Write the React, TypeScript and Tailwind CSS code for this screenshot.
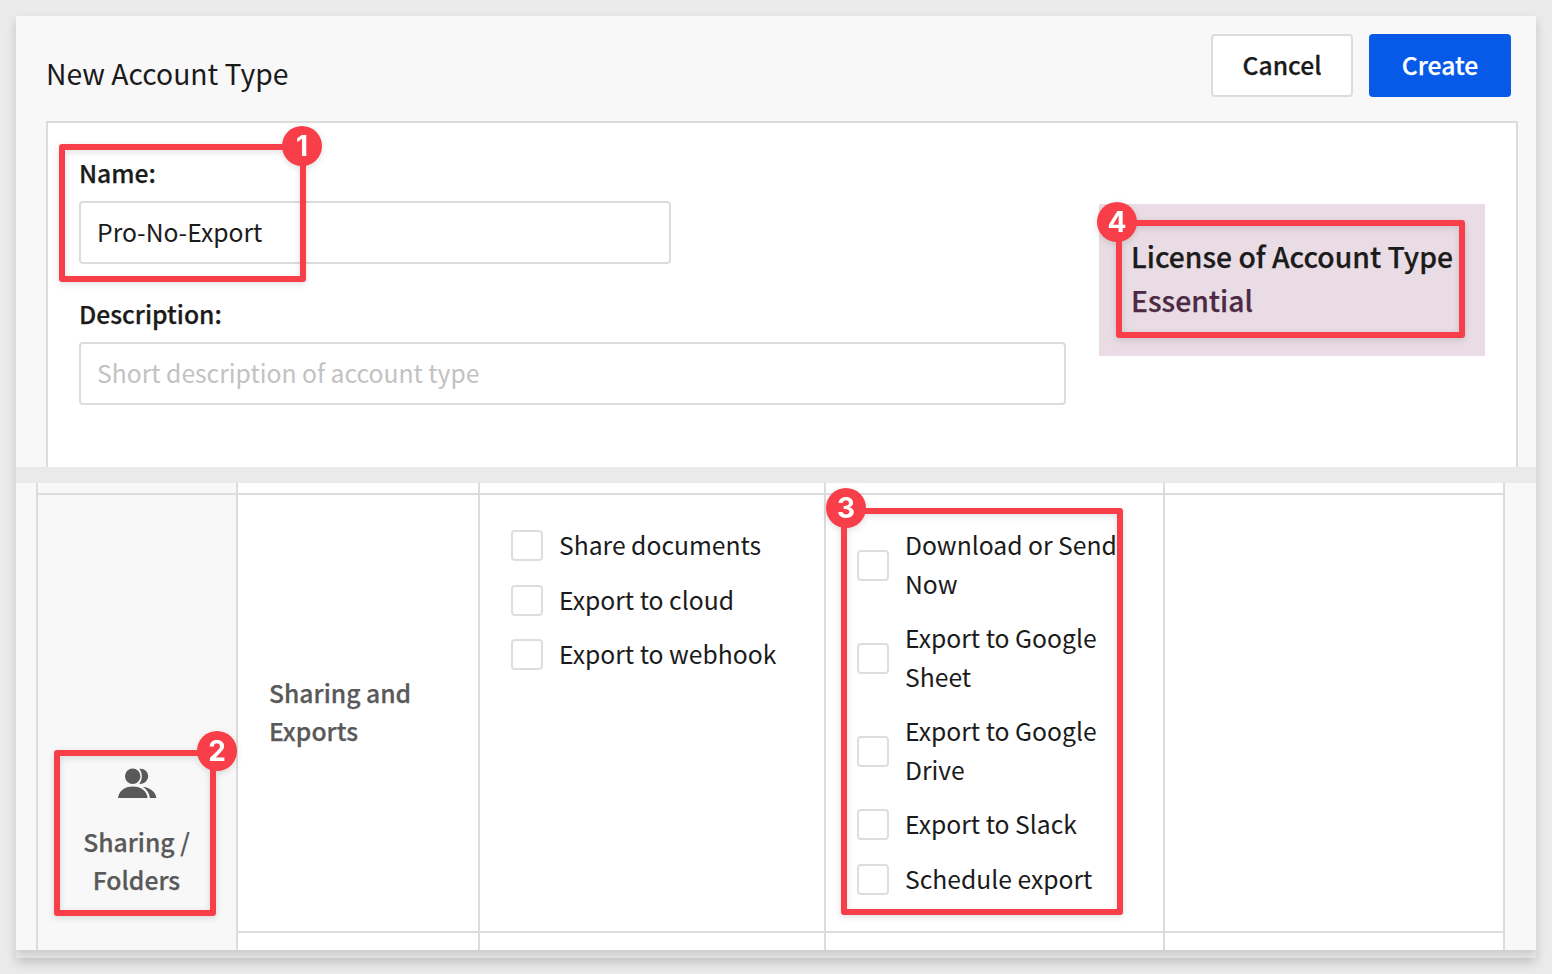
import React from "react";

const MARK = "drop-shadow-[0_2px_3px_rgba(0,0,0,0.13)]";
const STRONG = "font-medium [-webkit-text-stroke:0.25px_currentColor]";

function Badge({ n, className }: { n: number; className: string }) {
  return (
    <span
      className={`absolute flex size-10 items-center justify-center rounded-full bg-[#f83e49] pb-px font-['Inter',sans-serif] text-[28px] font-bold leading-none text-white ${className}`}
    >
      {n}
    </span>
  );
}

function Callout({ n, box, badge }: { n: number; box: string; badge: string }) {
  return (
    <div className={`pointer-events-none absolute rounded-[3px] border-[6px] border-[#f83e49] ${MARK} ${box}`}>
      <Badge n={n} className={badge} />
    </div>
  );
}

function Option({ lines }: { lines: string[] }) {
  return (
    <label className="flex items-center gap-4">
      <span className="h-[31px] w-8 shrink-0 rounded-[4px] border-2 border-[#dedede] bg-white" />
      <span className="-mt-[1.5px] mb-[1.5px] flex flex-col whitespace-nowrap leading-[38.5px]">
        {lines.map((l) => (
          <span key={l}>{l}</span>
        ))}
      </span>
    </label>
  );
}

const basic = [["Share documents"], ["Export to cloud"], ["Export to webhook"]];
const exportsList = [
  ["Download or Send", "Now"],
  ["Export to Google", "Sheet"],
  ["Export to Google", "Drive"],
  ["Export to Slack"],
  ["Schedule export"],
];

export default function App() {
  return (
    <div className="relative h-[974px] w-[1552px] overflow-hidden bg-[#ebebeb] px-4 pt-4 font-['Noto_Sans_CJK_SC',sans-serif] text-[24.7px] text-[#1b1b1b]">
      <div className="h-[942px] bg-[#eaeaea] shadow-[0_5px_10px_rgba(0,0,0,0.17)]">
        <div className="flex h-[934px] flex-col bg-[#eaeaea] shadow-[0_5px_10px_rgba(0,0,0,0.14)] [clip-path:inset(0_0_-8px_0)]">
          <section className="flex h-[451px] flex-col bg-[#f8f8f8]">
            <header className="flex h-[105px] items-start justify-between pl-[30px] pr-[25px] pt-[18px]">
              <h1 className="pt-[18px] text-[28.3px] leading-[42px]">New Account Type</h1>
              <div className="flex gap-4">
                <button className={`h-[63px] w-[142px] rounded-[4px] border-2 border-[#dcdcdc] bg-white pb-[2px] ${STRONG}`}>
                  Cancel
                </button>
                <button className={`h-[63px] w-[142px] rounded-[4px] bg-[#075ae8] pb-[2px] text-white ${STRONG}`}>
                  Create
                </button>
              </div>
            </header>
            <div className="ml-[30px] mr-[18px] flex flex-1 justify-between border-x-2 border-t-2 border-[#dcdcdc] bg-white pl-[31px] pr-[31px]">
              <div className="flex w-[987px] flex-col pt-[30px]">
                <span className={`leading-[38px] ${STRONG}`}>Name:</span>
                <div className="mt-[10px] flex h-[63px] w-[592px] items-center rounded-[4px] border-2 border-[#dcdcdc] pb-[2px] pl-4">
                  Pro-No-Export
                </div>
                <span className={`mt-[30px] leading-[38px] ${STRONG}`}>Description:</span>
                <div className="mt-[10px] flex h-[63px] items-center rounded-[4px] border-2 border-[#dcdcdc] pb-[2px] pl-4 text-[#c2c2c2]">
                  Short description of account type
                </div>
              </div>
              <div
                className={`mt-[81px] flex h-[152px] w-[386px] flex-col whitespace-nowrap bg-[#e9dce4] pl-8 pt-[30px] text-[28.3px] leading-[44px] ${STRONG}`}
              >
                <span>License of Account Type</span>
                <span className="text-[#4d2a43]">Essential</span>
              </div>
            </div>
          </section>

          <section className="mt-4 grid h-[467px] grid-cols-[200px_242px_346px_339px_342px] grid-rows-[10px_438px_19px] bg-[#f8f8f8] pl-5 [&>div]:border-l-2 [&>div]:border-[#dcdcdc]">
            <div />
            <div className="bg-white" />
            <div className="bg-white" />
            <div className="bg-white" />
            <div className="border-r-2 bg-white" />

            <div
              className={`row-span-2 flex flex-col items-center border-t-2 pr-px pt-[271px] text-center leading-[38.5px] text-[#595959] ${STRONG}`}
            >
              <svg className="h-8 w-10" viewBox="0 0 40 32" fill="#595959">
                <circle cx="15.7" cy="10.3" r="7.7" />
                <path d="M22.4 2.8a7.6 7.6 0 1 1 0 15 12.4 12.4 0 0 0 0-15z" />
                <path d="M1 32c.8-7 6.500-11.500 14.800-11.500S29.800 25 30.600 32z" />
                <path d="M25.800 20.700c7.500 1 12.800 5.200 13.600 11.300h-6.500c-.6-4.800-3-8.800-7.100-11.300z" />
              </svg>
              <span className="mt-[23.5px]">Sharing /</span>
              <span>Folders</span>
            </div>
            <div
              className={`flex flex-col justify-center border-t-2 bg-white pb-[4px] pl-[31px] leading-[38.5px] text-[#595959] ${STRONG}`}
            >
              <span>Sharing and</span>
              <span>Exports</span>
            </div>
            <div className="flex flex-col gap-4 border-t-2 bg-white pl-[31px] pt-[31.5px]">
              {basic.map((l) => (
                <Option key={l.join()} lines={l} />
              ))}
            </div>
            <div className="flex flex-col gap-4 border-t-2 bg-white pl-[31px] pt-[31.5px]">
              {exportsList.map((l) => (
                <Option key={l.join()} lines={l} />
              ))}
            </div>
            <div className="border-r-2 border-t-2 bg-white" />

            <div className="border-t-2 bg-white" />
            <div className="border-t-2 bg-white" />
            <div className="border-t-2 bg-white" />
            <div className="border-r-2 border-t-2 bg-white" />
          </section>
        </div>
      </div>

      <Callout n={1} box="left-[59px] top-[144px] h-[138px] w-[247px]" badge="left-[217px] top-[-24px]" />
      <Callout n={2} box="left-[54px] top-[750px] h-[166px] w-[162px]" badge="left-[137px] top-[-25px]" />
      <Callout n={3} box="left-[841px] top-[508px] h-[407px] w-[282px]" badge="left-[-21px] top-[-26px]" />
      <Callout n={4} box="left-[1116px] top-[220px] h-[118px] w-[349px]" badge="left-[-25px] top-[-24px]" />
    </div>
  );
}
